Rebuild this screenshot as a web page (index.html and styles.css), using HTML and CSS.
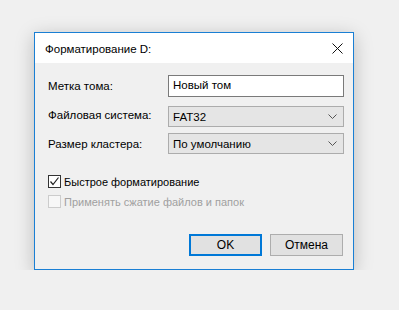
FILE: index.html
```html
<!DOCTYPE html>
<html lang="ru">
<head>
    <meta charset="UTF-8" />
    <title>Форматирование D:</title>
    <link rel="stylesheet" href="styles.css">
</head>
<body>
<div class="window">
    <div class="titlebar">
        <span class="title">Форматирование D:</span>
        <svg class="close" width="11" height="11" viewBox="0 0 11 11">
            <path d="M0.5 0.5 L10.5 10.5 M10.5 0.5 L0.5 10.5" stroke="#111" stroke-width="1" fill="none"/>
        </svg>
    </div>

    <div class="content">
        <div class="form">
            <label class="lbl">Метка тома:</label>
            <div class="field text-field">Новый том</div>

            <label class="lbl">Файловая система:</label>
            <div class="field combo combo-first">
                <span>FAT32</span>
                <svg class="chev" width="9" height="5" viewBox="0 0 9 5"><path d="M0.5 0.5 L4.5 4.5 L8.5 0.5" stroke="#555" fill="none"/></svg>
            </div>

            <label class="lbl">Размер кластера:</label>
            <div class="field combo">
                <span>По умолчанию</span>
                <svg class="chev" width="9" height="5" viewBox="0 0 9 5"><path d="M0.5 0.5 L4.5 4.5 L8.5 0.5" stroke="#555" fill="none"/></svg>
            </div>
        </div>

        <div class="checks">
            <div class="check">
                <span class="box">
                    <svg width="11" height="11" viewBox="0 0 11 11"><path d="M1.5 5.5 L4 8.5 L9.5 1.5" stroke="#222" stroke-width="1.2" fill="none"/></svg>
                </span>
                <span>Быстрое форматирование</span>
            </div>
            <div class="check disabled">
                <span class="box"></span>
                <span>Применять сжатие файлов и папок</span>
            </div>
        </div>

        <div class="buttons">
            <button class="btn default">OK</button>
            <button class="btn">Отмена</button>
        </div>
    </div>
</div>
</body>
</html>
```

FILE: styles.css
```css
body {
    margin: 0;
    background-color: #f0f0f0;
    font-family: "Liberation Sans", Arial, sans-serif;
    font-size: 11px;
    color: #000;
    padding: 32px 0 0 34px;
}

.window {
    width: 318px;
    height: 236px;
    border: 1px solid #1a7fd4;
    background-color: #f0f0f0;
    box-shadow: 0 4px 18px rgba(0, 0, 0, 0.22);
    display: flex;
    flex-direction: column;
}

.titlebar {
    height: 30px;
    background-color: #fff;
    display: flex;
    align-items: center;
    justify-content: space-between;
    padding: 0 10px 0 10px;
}

.title {
    font-size: 11.5px;
    padding-top: 1px;
}

.content {
    padding: 12px 9px 0 13px;
}

.form {
    display: grid;
    grid-template-columns: 120px 176px;
    align-items: center;
    row-gap: 6px;
}

.lbl {
    line-height: 16px;
    font-size: 11.5px;
}

.field {
    box-sizing: border-box;
    height: 21px;
    display: flex;
    align-items: center;
    padding: 0 4px;
    font-size: 11.5px;
}

.text-field {
    height: 22px;
    background-color: #fff;
    border: 1px solid #7a7a7a;
    padding-bottom: 3px;
}

.combo {
    background-color: #e5e5e5;
    border: 1px solid #acacac;
    justify-content: space-between;
    padding-right: 6px;
}

.combo-first {
    margin-top: 3px;
}

.checks {
    margin-top: 21px;
    display: flex;
    flex-direction: column;
    gap: 7px;
}

.check {
    display: flex;
    align-items: center;
    gap: 3px;
    height: 13px;
    font-size: 11px;
}

.box {
    box-sizing: border-box;
    width: 13px;
    height: 13px;
    border: 1px solid #333;
    background-color: #fff;
    display: flex;
    align-items: center;
    justify-content: center;
}

.check.disabled {
    color: #a0a0a0;
}

.check.disabled .box {
    border-color: #cccccc;
    background-color: #f7f7f7;
}

.buttons {
    margin-top: 26px;
    display: flex;
    justify-content: flex-end;
    gap: 8px;
    padding-right: 1px;
}

.btn {
    box-sizing: border-box;
    width: 73px;
    height: 22px;
    font-family: inherit;
    font-size: 12px;
    background-color: #e1e1e1;
    border: 1px solid #adadad;
    padding: 0;
    color: #000;
}

.btn.default {
    border: 2px solid #0078d7;
}
```
